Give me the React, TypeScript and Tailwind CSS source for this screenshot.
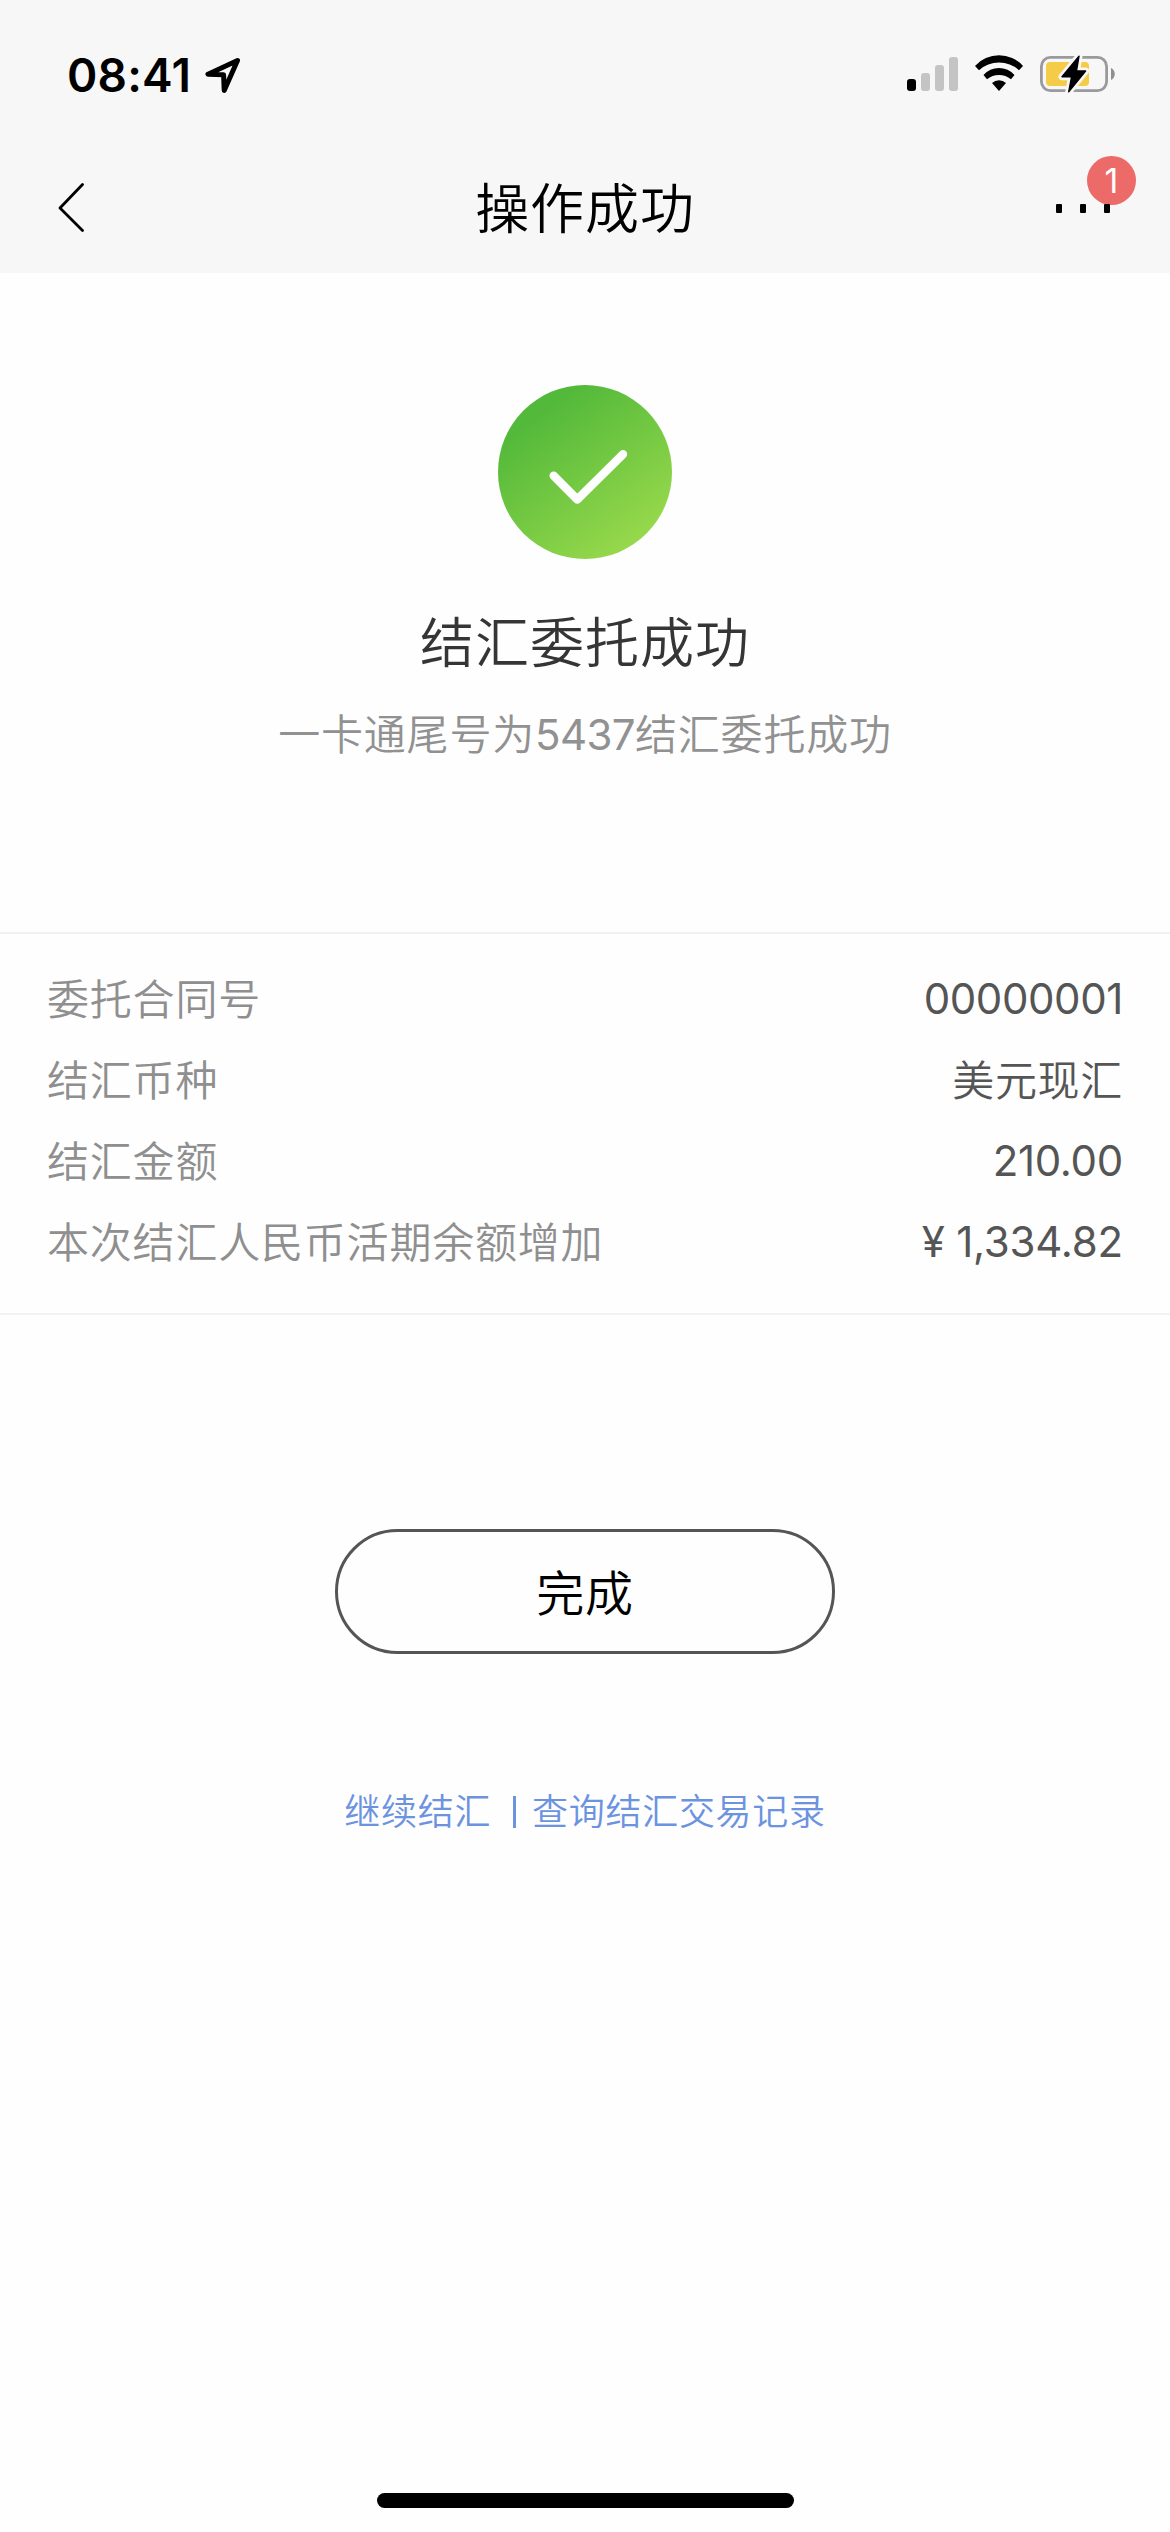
import React from 'react';

interface DetailRow {
  label: string;
  value: string;
  valueClass: string;
}

const rows: DetailRow[] = [
  { label: '委托合同号', value: '00000001', valueClass: 'font-normal tracking-[-0.4px] pt-px' },
  { label: '结汇币种', value: '美元现汇', valueClass: 'tracking-[0.7px] pt-[3px]' },
  { label: '结汇金额', value: '210.00', valueClass: 'font-normal tracking-[-0.3px] pt-px' },
  { label: '本次结汇人民币活期余额增加', value: '¥ 1,334.82', valueClass: 'font-normal tracking-[-0.2px] pt-px' },
];

const StatusBar = () => (
  <div className="flex h-[146px] items-center justify-between pl-[67px] pr-[55px]">
    <div className="flex items-center">
      <span className="mt-[3px] w-[138px] whitespace-nowrap text-[46px] font-semibold leading-[56px] tracking-[0.2px]">
        08:41
      </span>
      <svg width="36" height="36" viewBox="0 0 36 36" fill="none" className="mt-[3px] overflow-visible">
        <path
          d="M32.5 3.6 3 17.2 18.6 17.8 19.2 33.4Z"
          stroke="#000"
          strokeWidth="5"
          strokeLinejoin="round"
        />
      </svg>
    </div>
    <div className="mt-[2px] flex items-center">
      <svg width="51" height="36" viewBox="0 0 51 36">
        <rect x="0" y="23" width="9" height="12" rx="3" fill="#000" />
        <rect x="14" y="17" width="9" height="18" rx="3" fill="#c4c4c4" />
        <rect x="28" y="9" width="9" height="26" rx="3" fill="#c4c4c4" />
        <rect x="42" y="1" width="9" height="34" rx="3" fill="#c4c4c4" />
      </svg>
      <svg width="50" height="36" viewBox="0 0 50 36" className="ml-[16px] overflow-visible">
        <path d="M1 9.9A32.5 32.5 0 0 1 49 9.9L45 14.2A30 30 0 0 0 5 14.2Z" />
        <path d="M9.5 19A20.5 20.5 0 0 1 40.5 19L37 23.3A18.9 18.9 0 0 0 13 23.3Z" />
        <path d="M18 27A10 10 0 0 1 32 27L25 35Z" />
      </svg>
      <svg width="75" height="40" viewBox="0 0 75 40" className="ml-[16px]">
        <rect x="1.4" y="3.4" width="65.2" height="33.2" rx="9" fill="none" stroke="#9a999b" strokeWidth="2.8" />
        <rect x="6" y="8" width="43" height="24" rx="4" fill="#f5cc47" />
        <path d="M71 14C76 16 76 24 71 26Z" fill="#8f8f90" />
        <path
          d="M39 2.2 22 22.7H31.6L28.7 37.8 45.6 17H36.5Z"
          fill="#f7f7f7"
          stroke="#f7f7f7"
          strokeWidth="7"
          strokeLinejoin="round"
        />
        <path
          d="M39 2.2 22 22.7H31.6L28.7 37.8 45.6 17H36.5Z"
          fill="#000"
          stroke="#000"
          strokeWidth="1.4"
          strokeLinejoin="round"
        />
      </svg>
    </div>
  </div>
);

const NavBar = () => (
  <div className="flex h-[127px] items-center justify-between pl-[58px] pr-[60px]">
    <svg width="56" height="50" viewBox="0 0 56 50" fill="none" className="mb-[5px]">
      <path d="M24.5 2.5 2 26 24.5 48.5" stroke="#000" strokeWidth="2.8" strokeLinecap="round" strokeLinejoin="round" />
    </svg>
    <h1 className="text-[54px] font-[350] leading-[70px] tracking-[0.9px]">操作成功</h1>
    <div className="relative mb-[2px] flex w-[54px] justify-between">
      <span className="absolute -top-[48px] left-[31px] flex h-[49px] w-[49px] items-center justify-center rounded-full bg-[#ec6a67] text-[34px] leading-none text-white">
        1
      </span>
      <i className="relative h-[9px] w-[6px] rounded-[1px] bg-black" />
      <i className="relative h-[9px] w-[6px] rounded-[1px] bg-black" />
      <i className="relative h-[9px] w-[6px] rounded-[1px] bg-black" />
    </div>
  </div>
);

const SuccessIcon = () => (
  <svg width="174" height="174" viewBox="0 0 174 174" fill="none">
    <defs>
      <linearGradient id="success" x1="40" y1="30" x2="134" y2="158" gradientUnits="userSpaceOnUse">
        <stop stopColor="#53b93a" />
        <stop offset="1" stopColor="#96d84b" />
      </linearGradient>
    </defs>
    <circle cx="87" cy="87" r="87" fill="url(#success)" />
    <path d="M55.7 90.8 79.3 114.5 125 69.2" stroke="#fff" strokeWidth="8.4" strokeLinecap="round" strokeLinejoin="round" />
  </svg>
);

const App = () => {
  return (
    <div className="flex h-[2532px] w-[1170px] flex-col bg-[#fefefe] font-['Inter','Noto_Sans_CJK_SC',sans-serif] text-black">
      <header className="h-[273px] bg-[#f7f7f7]">
        <StatusBar />
        <NavBar />
      </header>

      <section className="flex h-[659px] flex-col items-center pt-[112px]">
        <SuccessIcon />
        <h2 className="mt-[50px] text-[54px] font-[350] leading-[70px] tracking-[1px] text-[#353535]">结汇委托成功</h2>
        <p className="mt-[28px] text-[42px] font-[350] leading-[56px] tracking-[0.8px] text-[#919191]">
          一卡通尾号为<span className="font-normal tracking-[-0.6px]">5437</span>结汇委托成功
        </p>
      </section>

      <section className="flex h-[383px] flex-col border-y-2 border-[#f1f1f1] px-[47px] pt-[24px]">
        {rows.map((row) => (
          <div key={row.label} className="flex h-[81px] items-center justify-between text-[42px] font-[350] leading-[56px]">
            <span className="pt-[3px] tracking-[0.8px] text-[#8f8f8f]">{row.label}</span>
            <span className={`text-[#555] ${row.valueClass}`}>{row.value}</span>
          </div>
        ))}
      </section>

      <section className="flex flex-col items-center pt-[214px]">
        <button className="flex h-[125px] w-[500px] items-center justify-center rounded-full border-[3px] border-[#555] pt-[5px] text-[48px] font-[350] leading-[64px] tracking-[0.8px]">
          完成
        </button>
        <div className="mt-[133px] flex items-center text-[36px] font-[350] leading-[50px] tracking-[0.7px] text-[#6b93e0]">
          <a>继续结汇</a>
          <i className="ml-[22px] mr-[16px] h-[32px] w-[3px] bg-[#6b93e0]" />
          <a>查询结汇交易记录</a>
        </div>
      </section>

      <div className="mx-auto mb-[24px] mt-auto h-[15px] w-[417px] rounded-full bg-black" />
    </div>
  );
};

export default App;
